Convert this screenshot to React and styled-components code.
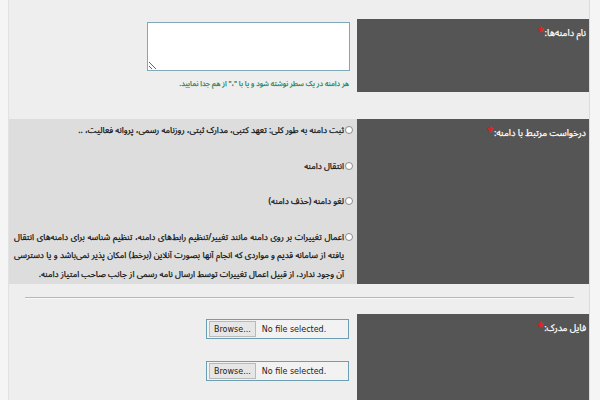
import React from "react";
import styled, { createGlobalStyle } from "styled-components";

const Global = createGlobalStyle`
  html, body { margin: 0; padding: 0; background: #f5f5f5; }
  body { font-family: "Noto Sans Arabic", "DejaVu Sans", sans-serif; }
  * { box-sizing: border-box; }
`;

const Page = styled.div`
  margin: 0 10px 0 8px;
  height: 400px;
  overflow: hidden;
  background: #eeeeee;
  border-left: 1px solid #e2e2e2;
  border-right: 1px solid #dcdcdc;
  direction: rtl;
  padding-top: 19px;
`;

const Row = styled.div`
  display: grid;
  grid-template-columns: 232px 1fr;
  height: ${(p) => p.$h}px;
  background: ${(p) => (p.$shade ? "#dddddd" : "transparent")};
  margin-bottom: ${(p) => p.$mb || 0}px;
`;

const Label = styled.div`
  background: #555555;
  color: #ffffff;
  font-size: 9.2px;
  -webkit-text-stroke: 0.25px #ffffff;
  padding: 6px 3px 0 0;
  line-height: 13px;
`;

const Star = styled.span`
  color: #e3231b;
  -webkit-text-stroke: 0.6px #e3231b;
  font-size: 10px;
  margin-right: 1px;
  vertical-align: 1px;
`;

const Field = styled.div`
  padding: ${(p) => p.$pad || "3px 7px 0 0"};
  display: flex;
  flex-direction: column;
  align-items: flex-start;
`;

const TextArea = styled.textarea`
  width: 203px;
  height: 49px;
  border: 1px solid #7fa8b8;
  background: #fff;
  resize: vertical;
  margin: 0;
  display: block;
`;

const Hint = styled.div`
  color: #25875c;
  font-size: 7.3px;
  -webkit-text-stroke: 0.25px #25875c;
  margin-top: 5px;
  margin-right: 1px;
`;

const Option = styled.label`
  display: flex;
  align-items: flex-start;
  font-size: 8.5px;
  color: #141414;
  -webkit-text-stroke: 0.25px #141414;
  line-height: 18.5px;
  margin-bottom: ${(p) => p.$mb || 0}px;
`;

const Radio = styled.input.attrs({ type: "radio" })`
  appearance: none;
  width: 8px;
  height: 8px;
  border: 1px solid #8a8a8a;
  border-radius: 50%;
  background: #fff;
  margin: 5px 0 0 1px;
  flex: 0 0 auto;
`;

const Para = styled.span`
  display: block;
  width: 330px;
`;

const Line = styled.span`
  display: block;
  text-align: justify;
  text-align-last: ${(p) => (p.$last ? "right" : "justify")};
  white-space: nowrap;
`;

const Divider = styled.hr`
  border: 0;
  border-top: 1px solid #b8b8b8;
  border-bottom: 1px solid #f8f8f8;
  margin: 13px 15px 15px 16px;
`;

const FileBox = styled.div`
  direction: ltr;
  width: 143px;
  height: 20px;
  border: 1px solid #6c9fb4;
  background: #f2f2f2;
  display: flex;
  align-items: center;
  padding-left: 2px;
  gap: 6px;
  font-family: "DejaVu Sans", sans-serif;
  font-size: 8px;
  color: #222;
  margin-bottom: ${(p) => p.$mb || 0}px;
`;

const BrowseBtn = styled.span`
  height: 16px;
  padding: 0 4px;
  display: flex;
  align-items: center;
  background: #e6e6e6;
  border: 1px solid #b9b9b9;
  color: #222;
`;

function FileInput({ mb }) {
  return (
    <FileBox $mb={mb}>
      <BrowseBtn>Browse...</BrowseBtn>
      <span>No file selected.</span>
    </FileBox>
  );
}

export default function App() {
  return (
    <>
      <Global />
      <Page>
        <Row $h={73} $mb={27}>
          <Label>
            نام دامنه‌ها:<Star>*</Star>
          </Label>
          <Field>
            <TextArea />
            <Hint>هر دامنه در یک سطر نوشته شود و یا با "،" از هم جدا نمایید.</Hint>
          </Field>
        </Row>
        <Row $h={165} $shade>
          <Label>
            درخواست مرتبط با دامنه:<Star>*</Star>
          </Label>
          <Field $pad="2px 4px 0 0">
            <Option $mb={17}>
              <Radio name="req" />
              ثبت دامنه به طور کلی: تعهد کتبی، مدارک ثبتی، روزنامه رسمی، پروانه فعالیت، ..
            </Option>
            <Option $mb={17}>
              <Radio name="req" />
              انتقال دامنه
            </Option>
            <Option $mb={17}>
              <Radio name="req" />
              لغو دامنه (حذف دامنه)
            </Option>
            <Option>
              <Radio name="req" />
              <Para>
                <Line>اعمال تغییرات بر روی دامنه مانند تغییر/تنظیم رابط‌های دامنه، تنظیم شناسه برای دامنه‌های انتقال</Line>
                <Line>یافته از سامانه قدیم و مواردی که انجام آنها بصورت آنلاین (برخط) امکان پذیر نمی‌باشد و یا دسترسی</Line>
                <Line $last>آن وجود ندارد، از قبیل اعمال تغییرات توسط ارسال نامه رسمی از جانب صاحب امتیاز دامنه.</Line>
              </Para>
            </Option>
          </Field>
        </Row>
        <Divider />
        <Row $h={120}>
          <Label>
            فایل مدرک:<Star>*</Star>
          </Label>
          <Field $pad="5px 8px 0 0">
            <FileInput mb={22} />
            <FileInput />
          </Field>
        </Row>
      </Page>
    </>
  );
}
